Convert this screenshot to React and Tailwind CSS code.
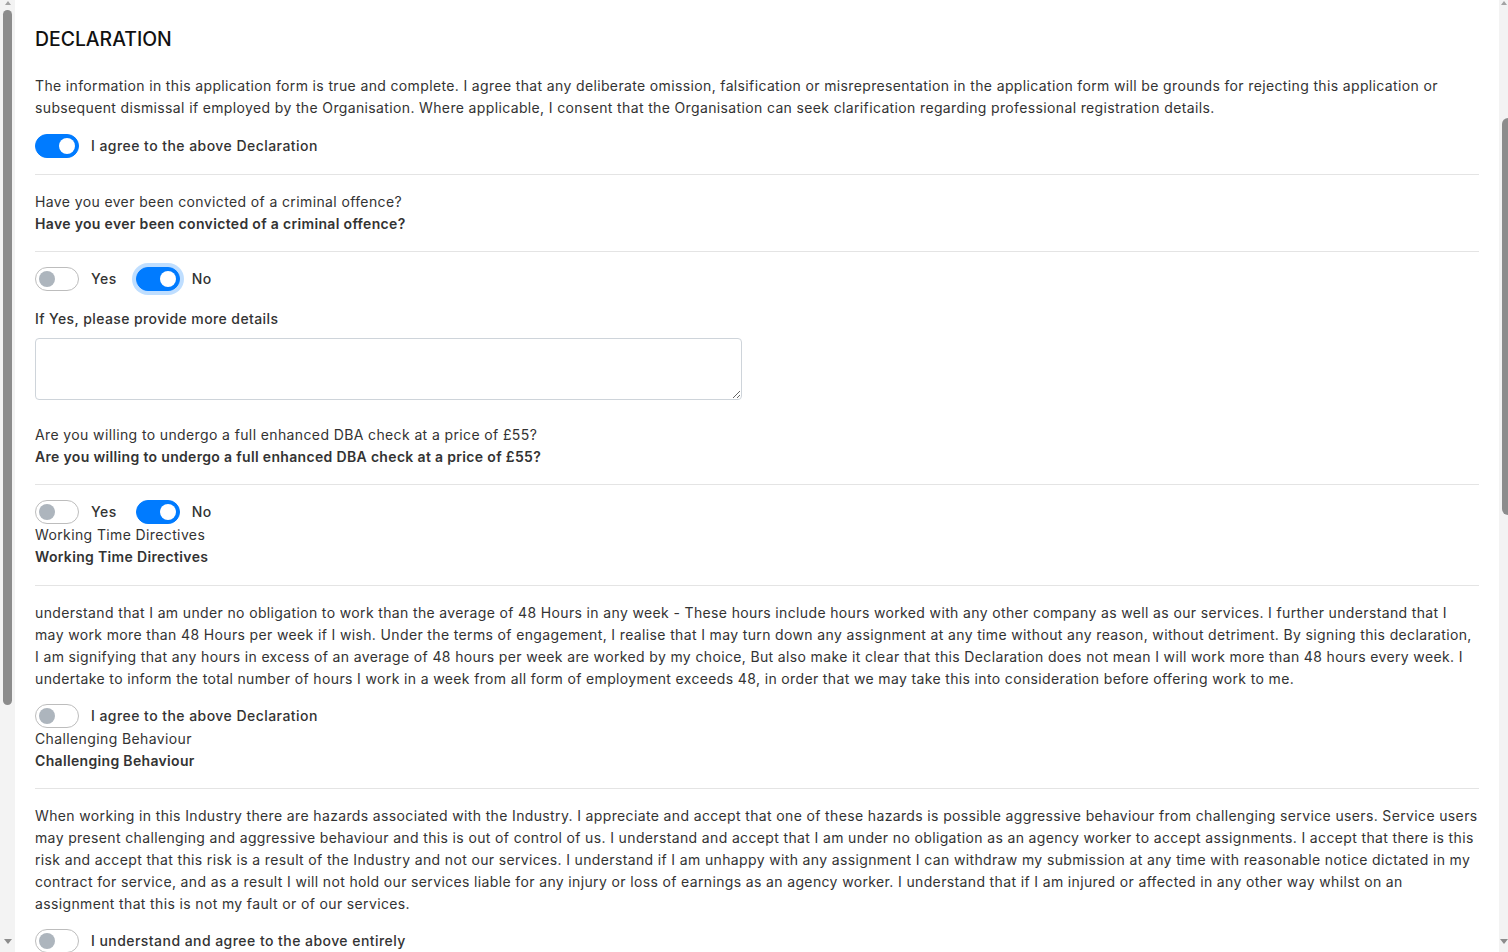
import React, { useState } from "react";

const Toggle = ({ checked, onChange, focused }) => (
  <button
    type="button"
    onClick={onChange}
    className={`flex h-6 w-11 shrink-0 items-center rounded-full border ${
      checked ? "justify-end border-[#007bff] bg-[#007bff]" : "justify-start border-[#bdbdbd] bg-white"
    } ${focused ? "ring-4 ring-[#007bff]/25" : ""}`}
  >
    <span className={`mx-[3px] h-4 w-4 rounded-full ${checked ? "bg-white" : "bg-[#adb5bd]"}`} />
  </button>
);

const Switch = ({ checked, onChange, label, focused }) => (
  <div className="flex items-center gap-3">
    <Toggle checked={checked} onChange={onChange} focused={focused} />
    <span className="pb-[2px] text-[14px] font-medium tracking-[0.45px] text-[#333]">{label}</span>
  </div>
);

const Question = ({ text }) => (
  <div className="text-[14px] leading-[22px] text-[#333]">
    <p className="tracking-[0.38px]">{text}</p>
    <p className="font-semibold tracking-[0.33px]">{text}</p>
  </div>
);

const Divider = () => <div className="h-px w-full bg-[#e4e4e4]" />;

const ScrollTrack = ({ width, thumbTop, thumbHeight, thumbClass }) => (
  <div className={`flex h-full shrink-0 flex-col bg-[#f3f3f3] ${width}`}>
    <div className="flex justify-center pt-px">
      <div className="h-0 w-0 border-x-[3px] border-b-[4px] border-x-transparent border-b-[#a3a3a3]" />
    </div>
    <div className={thumbTop} />
    <div className={`rounded-full bg-[#8c8c8c] ${thumbHeight} ${thumbClass}`} />
    <div className="flex-1" />
    <div className="flex justify-center pb-[8px]">
      <div className="h-0 w-0 border-x-[4px] border-t-[5px] border-x-transparent border-t-[#8c8c8c]" />
    </div>
  </div>
);

const bodyText = "text-[14px] leading-[22px] tracking-[0.36px] text-[#333]";

export default function App() {
  const [agreeDeclaration, setAgreeDeclaration] = useState(true);
  const [convicted, setConvicted] = useState("no");
  const [details, setDetails] = useState("");
  const [dbaCheck, setDbaCheck] = useState("no");
  const [agreeWtd, setAgreeWtd] = useState(false);
  const [agreeCb, setAgreeCb] = useState(false);

  return (
    <div className="flex h-[952px] w-full overflow-hidden bg-white font-['Inter',sans-serif]">
      <ScrollTrack width="w-[15px]" thumbTop="h-[5px]" thumbHeight="h-[695px]" thumbClass="mx-[3px]" />

      <div className="min-w-0 flex-1 px-5 pt-[25px]">
        <h2 className="text-[19.4px] font-medium leading-7 text-[#111]">DECLARATION</h2>

        <p className={`mt-[22px] ${bodyText}`}>
          The information in this application form is true and complete. I agree that any deliberate omission,
          falsification or misrepresentation in the application form will be grounds for rejecting this application
          or subsequent dismissal if employed by the Organisation. Where applicable, I consent that the Organisation
          can seek clarification regarding professional registration details.
        </p>

        <div className="mt-[15px] mb-4">
          <Switch
            checked={agreeDeclaration}
            onChange={() => setAgreeDeclaration(!agreeDeclaration)}
            label="I agree to the above Declaration"
          />
        </div>
        <Divider />

        <div className="mt-4 mb-4">
          <Question text="Have you ever been convicted of a criminal offence?" />
        </div>
        <Divider />

        <div className="mt-[15px] flex items-center gap-[19px]">
          <Switch checked={convicted === "yes"} onChange={() => setConvicted("yes")} label="Yes" />
          <Switch checked={convicted === "no"} onChange={() => setConvicted("no")} label="No" focused />
        </div>

        <label className="mt-[17px] block text-[14px] font-medium leading-[22px] tracking-[0.4px] text-[#333]">
          If Yes, please provide more details
        </label>
        <textarea
          value={details}
          onChange={(e) => setDetails(e.target.value)}
          className="mt-[8px] block h-[62px] w-[707px] rounded-[4px] border border-[#ced4da] px-3 py-2 text-[14px] outline-none"
        />

        <div className="mt-6 mb-4">
          <Question text="Are you willing to undergo a full enhanced DBA check at a price of £55?" />
        </div>
        <Divider />

        <div className="mt-[15px] flex items-center gap-[19px]">
          <Switch checked={dbaCheck === "yes"} onChange={() => setDbaCheck("yes")} label="Yes" />
          <Switch checked={dbaCheck === "no"} onChange={() => setDbaCheck("no")} label="No" />
        </div>
        <div className="mb-[17px]">
          <Question text="Working Time Directives" />
        </div>
        <Divider />

        <p className={`mt-4 ${bodyText}`}>
          understand that I am under no obligation to work than the average of 48 Hours in any week - These hours
          include hours worked with any other company as well as our services. I further understand that I may work
          more than 48 Hours per week if I wish. Under the terms of engagement, I realise that I may turn down any
          assignment at any time without any reason, without detriment. By signing this declaration, I am signifying
          that any hours in excess of an average of 48 hours per week are worked by my choice, But also make it clear
          that this Declaration does not mean I will work more than 48 hours every week. I undertake to inform the
          total number of hours I work in a week from all form of employment exceeds 48, in order that we may take
          this into consideration before offering work to me.
        </p>
        <div className="mt-[14px]">
          <Switch checked={agreeWtd} onChange={() => setAgreeWtd(!agreeWtd)} label="I agree to the above Declaration" />
        </div>
        <div className="mb-4">
          <Question text="Challenging Behaviour" />
        </div>
        <Divider />

        <p className={`mt-4 ${bodyText}`}>
          When working in this Industry there are hazards associated with the Industry. I appreciate and accept that
          one of these hazards is possible aggressive behaviour from challenging service users. Service users may
          present challenging and aggressive behaviour and this is out of control of us. I understand and accept that
          I am under no obligation as an agency worker to accept assignments. I accept that there is this risk and
          accept that this risk is a result of the Industry and not our services. I understand if I am unhappy with
          any assignment I can withdraw my submission at any time with reasonable notice dictated in my contract for
          service, and as a result I will not hold our services liable for any injury or loss of earnings as an agency
          worker. I understand that if I am injured or affected in any other way whilst on an assignment that this is
          not my fault or of our services.
        </p>
        <div className="mt-[14px]">
          <Switch checked={agreeCb} onChange={() => setAgreeCb(!agreeCb)} label="I understand and agree to the above entirely" />
        </div>
      </div>

      <ScrollTrack width="w-[9px]" thumbTop="h-[113px]" thumbHeight="h-[397px]" thumbClass="ml-[3px] rounded-r-none" />
    </div>
  );
}
